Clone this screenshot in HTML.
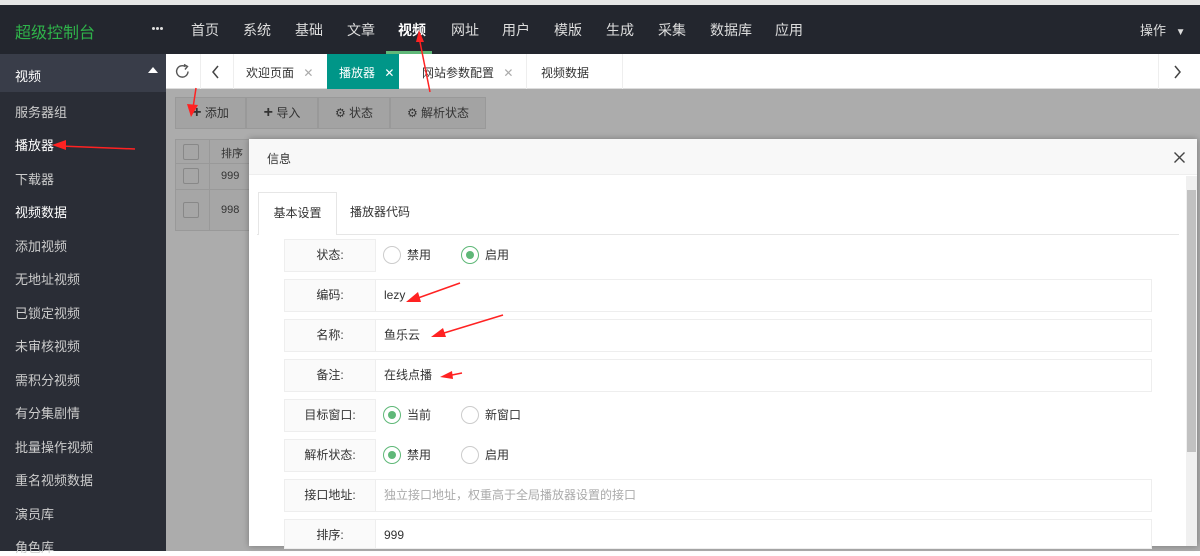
<!DOCTYPE html>
<html><head><meta charset="utf-8"><style>
*{margin:0;padding:0;box-sizing:border-box}
body{width:1200px;height:551px;overflow:hidden;position:relative;background:#fff;font-family:"Liberation Sans","Noto Sans CJK SC",sans-serif;font-size:13px;color:#333}
.abs{position:absolute}
#top{left:0;top:0;width:1200px;height:54px;background:#23262e;border-top:5px solid #e6e6e6}
#top .logo{left:15px;top:14px;color:#2fb34a;font-size:16px}
#top .nav{top:15px;color:#ddd;font-size:14px}
#side{left:0;top:54px;width:166px;height:497px;background:#2a2d36}
#side .hd{left:0;top:0;width:166px;height:38px;background:#393d49;color:#fff;padding:12px 15px;font-size:13px}
#side .it{left:15px;color:#ccc;font-size:13px}
#tabs{left:166px;top:54px;width:1034px;height:35px;background:#fff;border-bottom:1px solid #ddd}
#gray{left:166px;top:89px;width:1034px;height:462px;background:#acacac}
.btn{top:97px;height:32px;background:#a3a3a3;border:1px solid #999;color:#333;font-size:12px;text-align:center;line-height:30px}
#modal{left:249px;top:139px;width:948px;height:407px;background:#fff;box-shadow:0 0 6px rgba(0,0,0,.3)}
.row{left:35px;width:868px;height:33px;border:1px solid #eee;background:#fff}
.lab{left:0;top:0;width:91px;height:100%;background:#fafafa;border-right:1px solid #eee;text-align:center;line-height:31px;font-size:12px}
.val{left:99px;top:0;line-height:31px;font-size:12px;color:#333}
.rad{display:inline-block;width:18px;height:18px;border:1px solid #ccc;border-radius:50%;vertical-align:-5px;margin-right:6px;position:relative}
.rad.on{border-color:#5fb878}
.rad.on:after{content:"";position:absolute;left:4px;top:4px;width:8px;height:8px;border-radius:50%;background:#5fb878}
</style></head><body>
<div id="top" class="abs">
<div class="abs logo">超级控制台</div>
<div class="abs" style="left:152px;top:22px;width:3px;height:3px;background:#ddd;border-radius:50%;box-shadow:4px 0 0 #ddd,8px 0 0 #ddd"></div>
<div class="abs nav" style="left:191px">首页</div>
<div class="abs nav" style="left:243px">系统</div>
<div class="abs nav" style="left:295px">基础</div>
<div class="abs nav" style="left:347px">文章</div>
<div class="abs nav" style="left:398px;color:#fff;font-weight:bold">视频</div>
<div class="abs" style="left:386px;top:46px;width:46px;height:4px;background:#5fb878"></div>
<div class="abs nav" style="left:451px">网址</div>
<div class="abs nav" style="left:502px">用户</div>
<div class="abs nav" style="left:554px">模版</div>
<div class="abs nav" style="left:606px">生成</div>
<div class="abs nav" style="left:658px">采集</div>
<div class="abs nav" style="left:710px">数据库</div>
<div class="abs nav" style="left:775px">应用</div>
<div class="abs nav" style="left:1140px;font-size:13px">操作 <span style="font-size:10px;margin-left:6px">▼</span></div>
</div>
<div id="side" class="abs">
<div class="abs hd">视频<span style="position:absolute;right:8px;top:13px;width:0;height:0;border-left:5px solid transparent;border-right:5px solid transparent;border-bottom:6px solid #fff"></span></div>
<div class="abs it" style="top:48px">服务器组</div>
<div class="abs it" style="top:81px;color:#fff">播放器</div>
<div class="abs it" style="top:115px">下载器</div>
<div class="abs it" style="top:148px;color:#fff">视频数据</div>
<div class="abs it" style="top:182px">添加视频</div>
<div class="abs it" style="top:215px">无地址视频</div>
<div class="abs it" style="top:249px">已锁定视频</div>
<div class="abs it" style="top:282px">未审核视频</div>
<div class="abs it" style="top:316px">需积分视频</div>
<div class="abs it" style="top:349px">有分集剧情</div>
<div class="abs it" style="top:383px">批量操作视频</div>
<div class="abs it" style="top:416px">重名视频数据</div>
<div class="abs it" style="top:450px">演员库</div>
<div class="abs it" style="top:483px">角色库</div>
</div>
<div id="tabs" class="abs">
<svg class="abs" style="left:8px;top:9px" width="17" height="17" viewBox="0 0 17 17"><path d="M14 8.5A5.7 5.7 0 1 1 11.5 3.7" fill="none" stroke="#555" stroke-width="1.4"/><path d="M10 1.5L13.5 3.5L11 6.5" fill="none" stroke="#555" stroke-width="1.4"/></svg>
<div class="abs" style="left:34px;top:0;width:1px;height:35px;background:#eee"></div>
<svg class="abs" style="left:45px;top:11px" width="10" height="14"><path d="M7 1L2 7L7 13" fill="none" stroke="#444" stroke-width="1.5"/></svg>
<div class="abs" style="left:67px;top:0;width:1px;height:35px;background:#eee"></div>
<div class="abs" style="left:80px;top:10px;font-size:12px">欢迎页面 <span style="color:#aaa;margin-left:6px">✕</span></div>
<div class="abs" style="left:161px;top:0;width:72px;height:35px;background:#009688;color:#fff;font-size:12px;padding:10px 0 0 12px;white-space:nowrap">播放器 <span style="margin-left:6px">✕</span></div>
<div class="abs" style="left:256px;top:10px;font-size:12px">网站参数配置 <span style="color:#aaa;margin-left:6px">✕</span></div>
<div class="abs" style="left:360px;top:0;width:1px;height:35px;background:#eee"></div>
<div class="abs" style="left:375px;top:10px;font-size:12px">视频数据</div>
<div class="abs" style="left:456px;top:0;width:1px;height:35px;background:#eee"></div>
<div class="abs" style="left:992px;top:0;width:1px;height:35px;background:#eee"></div>
<svg class="abs" style="left:1006px;top:11px" width="10" height="14"><path d="M3 1L8 7L3 13" fill="none" stroke="#444" stroke-width="1.5"/></svg>
</div>
<div id="gray" class="abs"></div>
<div class="abs btn" style="left:175px;width:71px"><b style="font-size:16px">+</b> 添加</div>
<div class="abs btn" style="left:246px;width:72px"><b style="font-size:16px">+</b> 导入</div>
<div class="abs btn" style="left:318px;width:72px">⚙ 状态</div>
<div class="abs btn" style="left:390px;width:96px">⚙ 解析状态</div>
<div class="abs" style="left:175px;top:139px;width:80px;height:92px;background:#a6a6a6;border:1px solid #999"></div>
<div class="abs" style="left:175px;top:163px;width:80px;height:1px;background:#999"></div>
<div class="abs" style="left:175px;top:189px;width:80px;height:1px;background:#999"></div>
<div class="abs" style="left:209px;top:139px;width:1px;height:92px;background:#999"></div>
<div class="abs" style="left:183px;top:144px;width:16px;height:16px;border:1px solid #888;border-radius:2px"></div>
<div class="abs" style="left:183px;top:168px;width:16px;height:16px;border:1px solid #888;border-radius:2px"></div>
<div class="abs" style="left:183px;top:202px;width:16px;height:16px;border:1px solid #888;border-radius:2px"></div>
<div class="abs" style="left:221px;top:145px;font-size:11px">排序</div>
<div class="abs" style="left:221px;top:170px;font-size:11px">999</div>
<div class="abs" style="left:221px;top:204px;font-size:11px">998</div>
<div id="modal" class="abs">
<div class="abs" style="left:0;top:0;width:948px;height:36px;background:#f8f8f8;border-bottom:1px solid #eee"></div>
<div class="abs" style="left:18px;top:11px;font-size:12px">信息</div>
<svg class="abs" style="left:925px;top:13px" width="11" height="11"><path d="M0.5 0.5L10.5 10.5M10.5 0.5L0.5 10.5" stroke="#444" stroke-width="1.4"/></svg>
<div class="abs" style="left:937px;top:37px;width:11px;height:370px;background:#f0f0f0"></div>
<div class="abs" style="left:938px;top:51px;width:9px;height:262px;background:#c1c1c1"></div>
<div class="abs" style="left:8px;top:95px;width:922px;height:1px;background:#e6e6e6"></div>
<div class="abs" style="left:9px;top:53px;width:79px;height:43px;background:#fff;border:1px solid #e6e6e6;border-bottom:none;text-align:center;line-height:40px;font-size:12px">基本设置</div>
<div class="abs" style="left:101px;top:64px;font-size:12px">播放器代码</div>

<div class="abs row" style="top:100px;width:92px"><div class="abs lab">状态:</div></div>
<div class="abs val" style="left:134px;top:101px"><span class="rad"></span>禁用<span class="rad on" style="margin-left:30px"></span>启用</div>
<div class="abs row" style="top:140px"><div class="abs lab">编码:</div><div class="abs val">lezy</div></div>
<div class="abs row" style="top:180px"><div class="abs lab">名称:</div><div class="abs val">鱼乐云</div></div>
<div class="abs row" style="top:220px"><div class="abs lab">备注:</div><div class="abs val">在线点播</div></div>
<div class="abs row" style="top:260px;width:92px"><div class="abs lab">目标窗口:</div></div>
<div class="abs val" style="left:134px;top:261px"><span class="rad on"></span>当前<span class="rad" style="margin-left:30px"></span>新窗口</div>
<div class="abs row" style="top:300px;width:92px"><div class="abs lab">解析状态:</div></div>
<div class="abs val" style="left:134px;top:301px"><span class="rad on"></span>禁用<span class="rad" style="margin-left:30px"></span>启用</div>
<div class="abs row" style="top:340px"><div class="abs lab">接口地址:</div><div class="abs val" style="color:#aaa">独立接口地址，权重高于全局播放器设置的接口</div></div>
<div class="abs row" style="top:380px;height:30px"><div class="abs lab">排序:</div><div class="abs val">999</div></div>
</div>
<svg class="abs" style="left:0;top:0" width="1200" height="551">
<g fill="#f22" stroke="#f22">
<line x1="420" y1="42" x2="430" y2="92" stroke-width="1.5"/><polygon points="416,42 424,42 419,30" stroke="none"/>
<line x1="196" y1="88" x2="193" y2="108" stroke-width="1.5"/><polygon points="187,104 198,105 191,117" stroke="none"/>
<line x1="60" y1="146" x2="135" y2="149" stroke-width="1.5"/><polygon points="52,145 66,140 66,150" stroke="none"/>
<line x1="418" y1="298" x2="460" y2="283" stroke-width="1.5"/><polygon points="406,302 418,292 421,302" stroke="none"/>
<line x1="444" y1="333" x2="503" y2="315" stroke-width="1.5"/><polygon points="431,337 443,328 446,337" stroke="none"/>
<line x1="452" y1="375" x2="462" y2="373" stroke-width="1.5"/><polygon points="440,377 452,371 453,379" stroke="none"/>
</g></svg>
</body></html>
